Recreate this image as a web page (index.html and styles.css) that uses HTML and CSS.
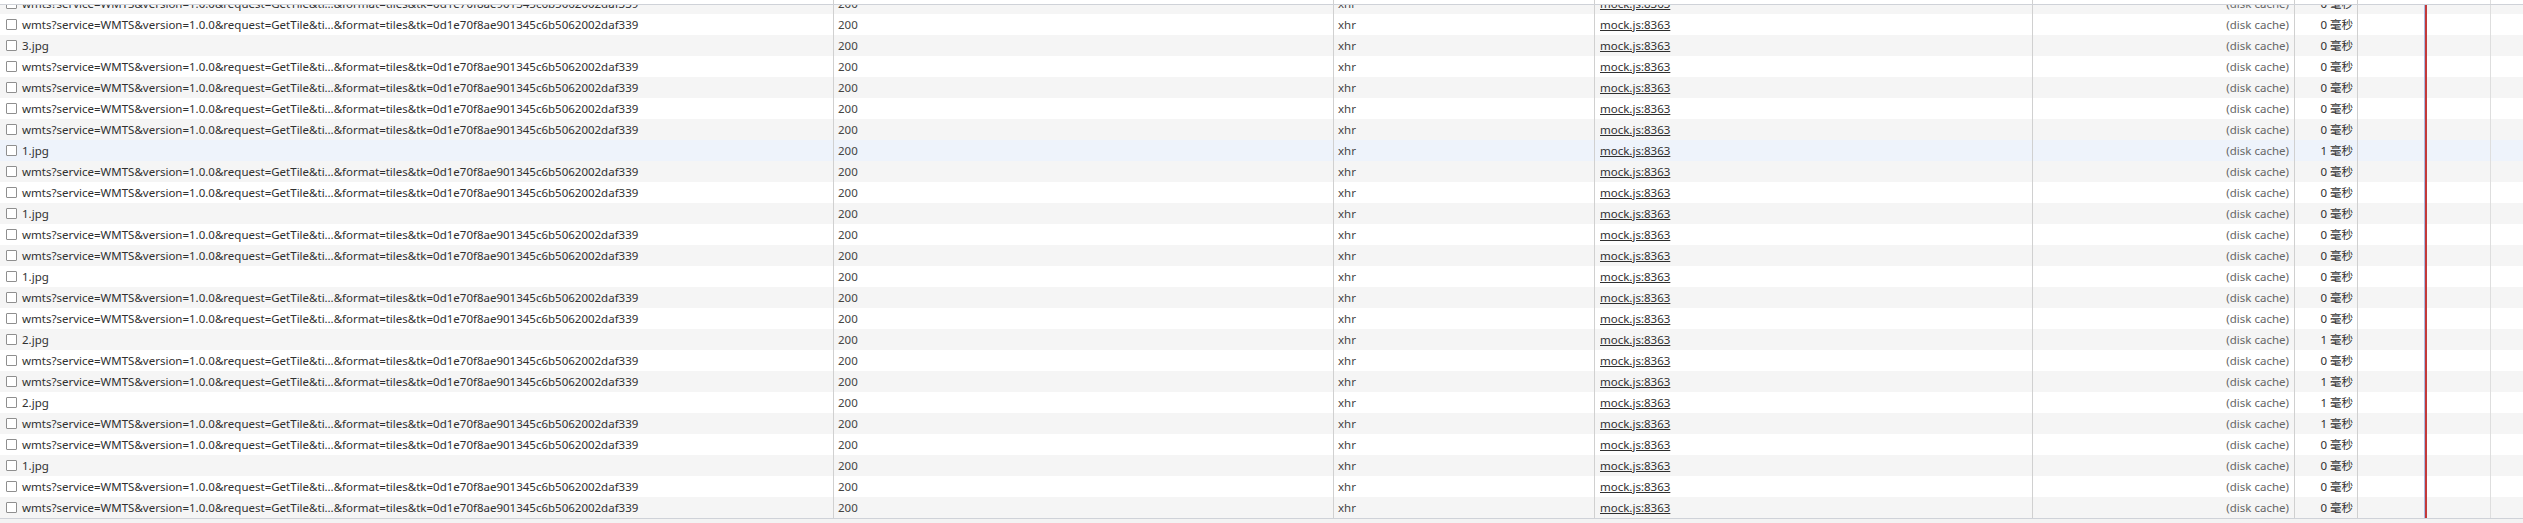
FILE: index.html
```html
<!DOCTYPE html>
<html lang="zh-CN">
<head>
    <meta charset="UTF-8">
    <title>Network</title>
    <link rel="stylesheet" href="styles.css">
</head>
<body>

<div class="network">
    <div class="grid header">
        <div class="cell"></div>
        <div class="cell"></div>
        <div class="cell"></div>
        <div class="cell"></div>
        <div class="cell"></div>
        <div class="cell"></div>
        <div class="cell waterfall-head"></div>
    </div>

    <div class="viewport">
        <div id="rows" class="rows"></div>
    </div>

    <div class="footer"></div>
</div>

<script>
    const wmts = "wmts?service=WMTS&version=1.0.0&request=GetTile&ti\u2026&format=tiles&tk=0d1e70f8ae901345c6b5062002daf339";

    // name, time (ms), hovered
    const requests = [
        [wmts, 0], [wmts, 0], ["3.jpg", 0], [wmts, 0], [wmts, 0], [wmts, 0], [wmts, 0],
        ["1.jpg", 1, true], [wmts, 0], [wmts, 0], ["1.jpg", 0], [wmts, 0], [wmts, 0],
        ["1.jpg", 0], [wmts, 0], [wmts, 0], ["2.jpg", 1], [wmts, 0], [wmts, 1],
        ["2.jpg", 1], [wmts, 1], [wmts, 0], ["1.jpg", 0], [wmts, 0], [wmts, 0]
    ];

    const list = document.getElementById("rows");

    requests.forEach(([name, time, hover]) => {
        const row = document.createElement("div");
        row.className = "grid row" + (hover ? " hover" : "");
        row.innerHTML = `
            <div class="cell name"><span class="check"></span><span class="label"></span></div>
            <div class="cell status">200</div>
            <div class="cell type">xhr</div>
            <div class="cell initiator"><span class="link">mock.js:8363</span></div>
            <div class="cell size">(disk cache)</div>
            <div class="cell time">${time} 毫秒</div>
            <div class="cell waterfall"></div>`;
        row.querySelector(".label").textContent = name;
        list.appendChild(row);
    });
</script>

</body>
</html>
```

FILE: styles.css
```css
body {
    margin: 0;
    background-color: #fff;
    font-family: "Segoe UI", "Noto Sans", "Noto Sans CJK SC", sans-serif;
    font-size: 11.5px;
    color: #303030;
}
.network {
    width: 2523px;
    height: 523px;
    display: flex;
    flex-direction: column;
    overflow: hidden;
}
.grid {
    display: grid;
    grid-template-columns: 834px 500px 261px 438px 262px 63px 1fr;
}
.cell {
    box-sizing: border-box;
    border-right: 1px solid #d0d0d0;
    white-space: nowrap;
    overflow: hidden;
}
.cell:last-child {
    border-right: none;
}
.header {
    height: 4px;
    border-bottom: 1px solid #cfd2d8;
}
.waterfall-head {
    background: linear-gradient(to right, transparent 132px, #dedede 132px 133px, transparent 133px);
}
.viewport {
    height: 513px;
    overflow: hidden;
}
.rows {
    margin-top: -12px;
}
.row {
    height: 21px;
    line-height: 21px;
    background-color: #fff;
}
.row:nth-child(odd) {
    background-color: #f5f5f5;
}
.row.hover {
    background-color: #eef3fb;
}
.name {
    display: flex;
    align-items: center;
    padding-left: 6px;
}
.check {
    width: 9px;
    height: 9px;
    border: 1px solid #8f8f8f;
    border-radius: 1px;
    background-color: #fff;
    margin-right: 5px;
    flex-shrink: 0;
}
.status, .type {
    padding-left: 4px;
    color: #444;
}
.initiator {
    padding-left: 5px;
}
.link {
    text-decoration: underline;
    color: #303030;
}
.size {
    text-align: right;
    padding-right: 5px;
    color: #666;
}
.time {
    text-align: right;
    padding-right: 4px;
}
.waterfall {
    background: linear-gradient(to right,
        transparent 66px,
        #a9bce4 66px 67px,
        #c23a3a 67px 69px,
        transparent 69px 132px,
        #dedede 132px 133px,
        transparent 133px);
}
.footer {
    flex: 1;
    border-top: 1px solid #cfd2d8;
    background-color: #f3f3f3;
}
```
